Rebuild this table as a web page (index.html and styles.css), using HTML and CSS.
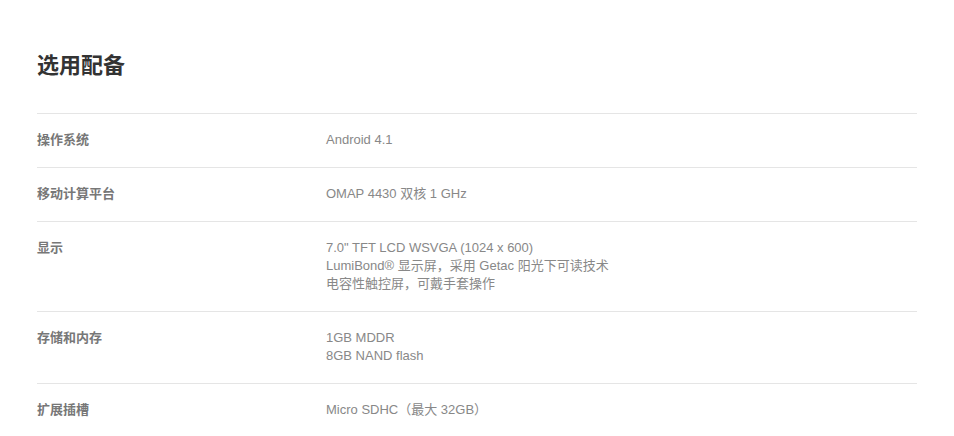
FILE: index.html
```html
<!DOCTYPE html>
<html lang="zh-CN">
<head>
<meta charset="utf-8">
<link rel="stylesheet" href="styles.css">
</head>
<body>
<main class="page">
  <h2 class="title">选用配备</h2>
  <div class="specs">
    <div class="row"><div class="label">操作系统</div><div class="value">Android 4.1</div></div>
    <div class="row"><div class="label">移动计算平台</div><div class="value">OMAP 4430 双核 1 GHz</div></div>
    <div class="row"><div class="label">显示</div><div class="value">7.0" TFT LCD WSVGA (1024 x 600)<br>LumiBond® 显示屏，采用 Getac 阳光下可读技术<br>电容性触控屏，可戴手套操作</div></div>
    <div class="row"><div class="label">存储和内存</div><div class="value">1GB MDDR<br>8GB NAND flash</div></div>
    <div class="row"><div class="label">扩展插槽</div><div class="value">Micro SDHC（最大 32GB）</div></div>
  </div>
</main>
</body>
</html>
```

FILE: styles.css
```css
html, body {
  margin: 0;
  padding: 0;
  background: #fff;
}
body {
  font-family: "Liberation Sans", Arial, "Noto Sans CJK SC", sans-serif;
  font-size: 13px;
  line-height: 18px;
}
.page {
  padding: 0 37px;
}
.title {
  margin: 0;
  padding-top: 50px;
  padding-bottom: 31px;
  font-size: 22px;
  line-height: 32px;
  font-weight: bold;
  color: #333;
}
.row {
  display: grid;
  grid-template-columns: 289px 1fr;
  padding: 17px 0 18px;
  border-top: 1px solid #e5e5e5;
}
.label {
  font-weight: bold;
  color: #777;
}
.value {
  color: #888;
}
```
